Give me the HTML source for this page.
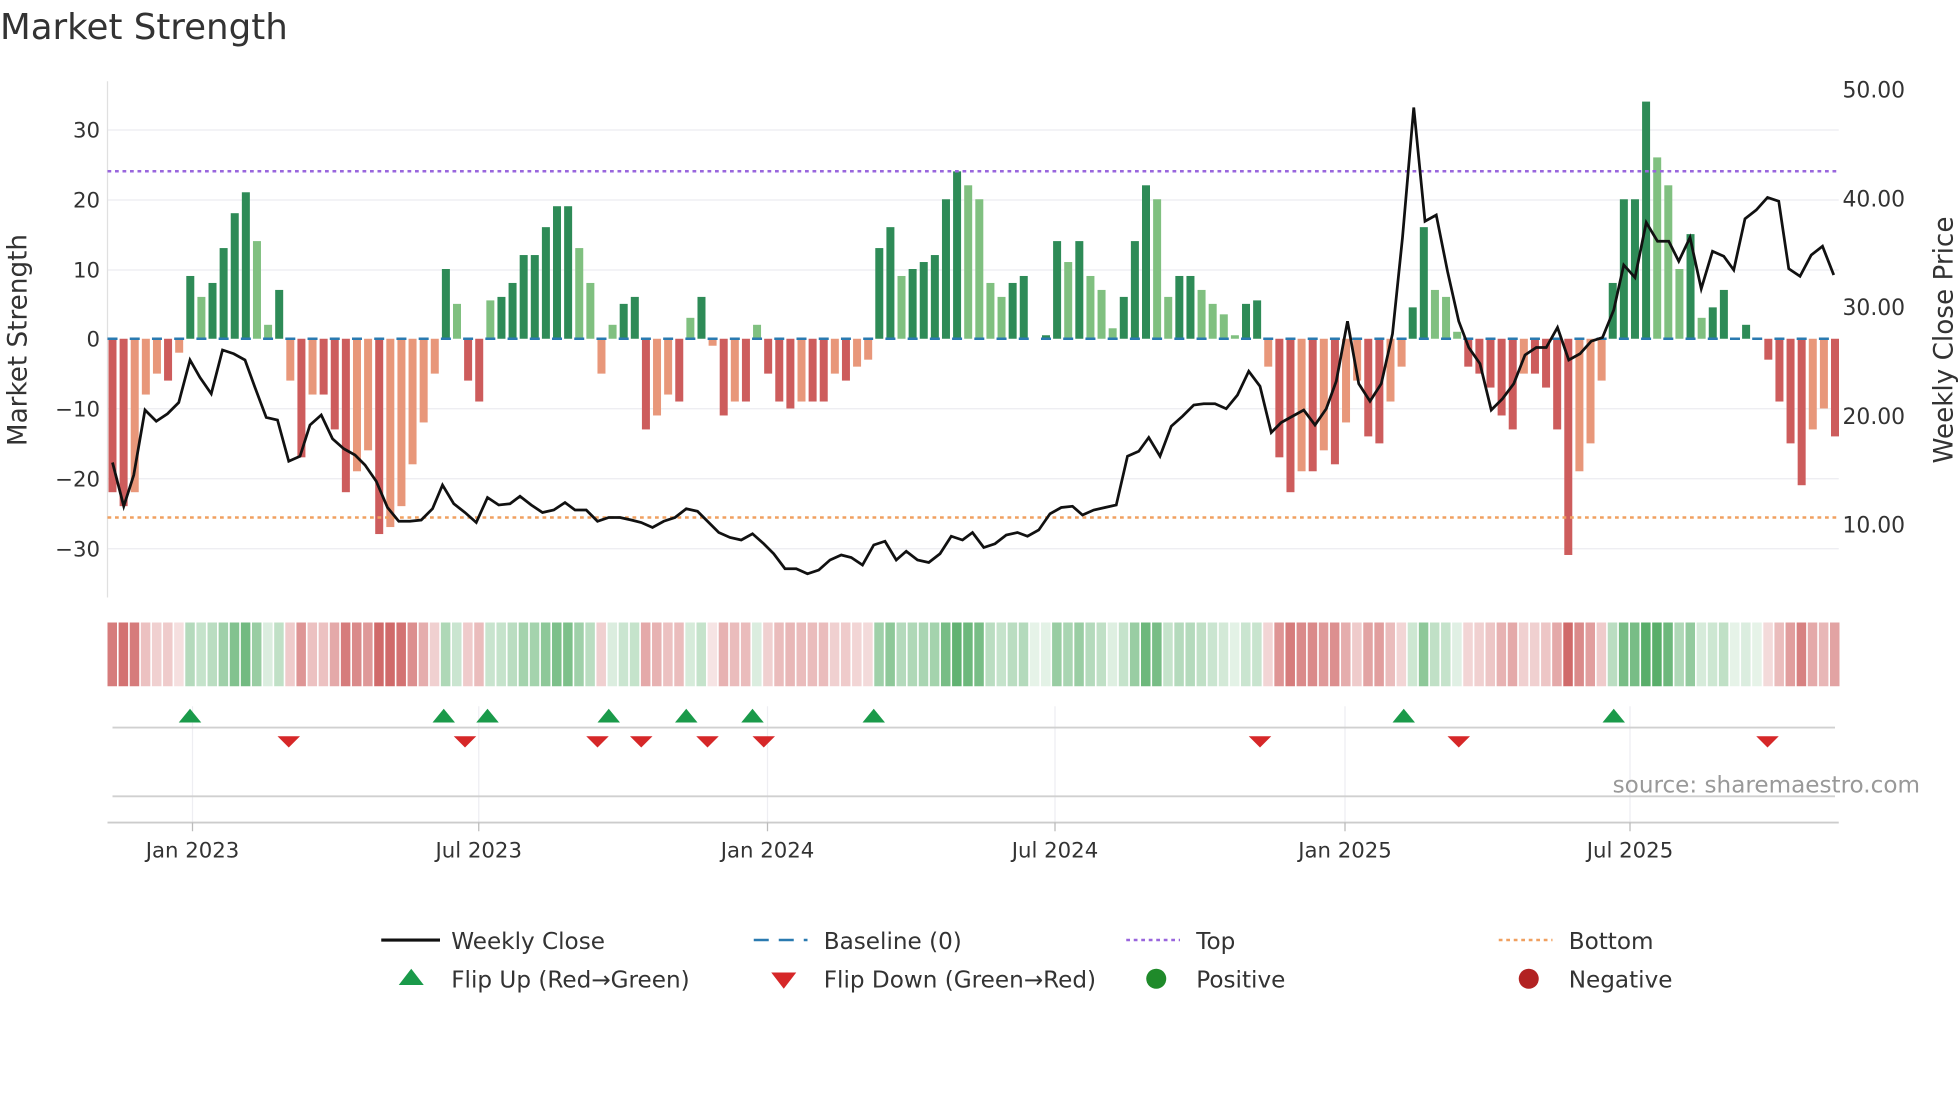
<!DOCTYPE html>
<html><head><meta charset="utf-8"><style>
html,body{margin:0;padding:0;background:#fff;width:1960px;height:1102px;overflow:hidden}
svg{display:block;font-family:"DejaVu Sans","Liberation Sans",sans-serif}
</style></head><body>
<svg id="s" width="1960" height="1102" viewBox="0 0 1568 881.6" xmlns="http://www.w3.org/2000/svg">
<rect width="1568" height="881.6" fill="#fff"/>
<text x="0" y="31" font-size="28.5" fill="#333">Market Strength</text>
<g stroke="#ececf0" stroke-width="1">
<line x1="86" x2="1471" y1="104" y2="104"/><line x1="86" x2="1471" y1="160" y2="160"/><line x1="86" x2="1471" y1="216" y2="216"/><line x1="86" x2="1471" y1="327" y2="327"/><line x1="86" x2="1471" y1="383" y2="383"/><line x1="86" x2="1471" y1="439" y2="439"/>
</g>
<line x1="86" x2="86" y1="65" y2="478" stroke="#e0e0e0"/>
<g font-size="17" fill="#333" text-anchor="end">
<text x="80" y="110">30</text><text x="80" y="166">20</text><text x="80" y="222">10</text><text x="80" y="277">0</text><text x="80" y="333">−10</text><text x="80" y="389">−20</text><text x="80" y="445">−30</text>
</g>
<g font-size="17.5" fill="#333">
<text x="1474" y="78">50.00</text><text x="1474" y="165">40.00</text><text x="1474" y="252">30.00</text><text x="1474" y="339">20.00</text><text x="1474" y="426">10.00</text>
</g>
<text transform="translate(21,272) rotate(-90)" font-size="21" fill="#333" text-anchor="middle">Market Strength</text>
<text transform="translate(1562,272) rotate(-90)" font-size="21" fill="#333" text-anchor="middle">Weekly Close Price</text>
<g id="bars"></g>
<line x1="86" x2="1471" y1="137" y2="137" stroke="#9966dd" stroke-width="2" stroke-dasharray="3,3"/>
<line x1="86" x2="1471" y1="414" y2="414" stroke="#f0a060" stroke-width="2" stroke-dasharray="3,3"/>
<polyline id="price" fill="none" stroke="#111" stroke-width="2.2"/>
<g id="strip"></g>
<g stroke="#eeeef2"><line x1="154" x2="154" y1="565" y2="660"/><line x1="383" x2="383" y1="565" y2="660"/><line x1="614" x2="614" y1="565" y2="660"/><line x1="844" x2="844" y1="565" y2="660"/><line x1="1076" x2="1076" y1="565" y2="660"/><line x1="1304" x2="1304" y1="565" y2="660"/></g>
<line x1="90" x2="1468" y1="582" y2="582" stroke="#d0d0d0" stroke-width="1.5"/>
<line x1="90" x2="1468" y1="637" y2="637" stroke="#d0d0d0" stroke-width="1.5"/>
<line x1="86" x2="1471" y1="658" y2="658" stroke="#ccc" stroke-width="1.5"/>
<g id="flips"></g>
<text x="1536" y="634" font-size="18.5" fill="#999" text-anchor="end">source: sharemaestro.com</text>
<g stroke="#bbb"><line x1="154" x2="154" y1="658" y2="665"/><line x1="383" x2="383" y1="658" y2="665"/><line x1="614" x2="614" y1="658" y2="665"/><line x1="844" x2="844" y1="658" y2="665"/><line x1="1076" x2="1076" y1="658" y2="665"/><line x1="1304" x2="1304" y1="658" y2="665"/></g>
<g font-size="17" fill="#333" text-anchor="middle">
<text x="154" y="686">Jan 2023</text><text x="383" y="686">Jul 2023</text><text x="614" y="686">Jan 2024</text><text x="844" y="686">Jul 2024</text><text x="1076" y="686">Jan 2025</text><text x="1304" y="686">Jul 2025</text>
</g>
<g font-size="18.5" fill="#333">
<line x1="305" x2="352" y1="752" y2="752" stroke="#111" stroke-width="2.5"/><text x="361" y="759">Weekly Close</text>
<line x1="603" x2="646" y1="752" y2="752" stroke="#2a7ab0" stroke-width="2" stroke-dasharray="12,8"/><text x="659" y="759">Baseline (0)</text>
<line x1="901" x2="944" y1="752" y2="752" stroke="#9966dd" stroke-width="2" stroke-dasharray="3,3"/><text x="957" y="759">Top</text>
<line x1="1199" x2="1242" y1="752" y2="752" stroke="#f0a060" stroke-width="2" stroke-dasharray="3,3"/><text x="1255" y="759">Bottom</text>
<polygon points="319,788 329,775 339,788" fill="#1a9a4a"/><text x="361" y="790">Flip Up (Red→Green)</text>
<polygon points="617,778 637,778 627,791" fill="#d62728"/><text x="659" y="790">Flip Down (Green→Red)</text>
<circle cx="925" cy="783" r="8" fill="#1f8a2a"/><text x="957" y="790">Positive</text>
<circle cx="1223" cy="783" r="8" fill="#b22222"/><text x="1255" y="790">Negative</text>
</g>
</svg>
<script>
var v=[-22,-24,-22,-8,-5,-6,-2,9,6,8,13,18,21,14,2,7,-6,-17,-8,-8,-13,-22,-19,-16,-28,-27,-24,-18,-12,-5,10,5,-6,-9,5.5,6,8,12,12,16,19,19,13,8,-5,2,5,6,-13,-11,-8,-9,3,6,-1,-11,-9,-9,2,-5,-9,-10,-9,-9,-9,-5,-6,-4,-3,13,16,9,10,11,12,20,24,22,20,8,6,8,9,0,0.5,14,11,14,9,7,1.5,6,14,22,20,6,9,9,7,5,3.5,0.5,5,5.5,-4,-17,-22,-19,-19,-16,-18,-12,-6,-14,-15,-9,-4,4.5,16,7,6,1,-4,-5,-7,-11,-13,-5,-5,-7,-13,-31,-19,-15,-6,8,20,20,34,26,22,10,15,3,4.5,7,0,2,0,-3,-9,-15,-21,-13,-10,-14];
var n=v.length,dx=(1468-90)/(n-1),y0=271,k=5.58,ns="http://www.w3.org/2000/svg";
function el(t,a,p){var e=document.createElementNS(ns,t);for(var q in a)e.setAttribute(q,a[q]);p.appendChild(e);return e;}
var B=document.getElementById('bars'),S=document.getElementById('strip');
for(var i=0;i<n;i++){var x=90+dx*i,val=v[i],h=Math.abs(val)*k,prev=i?Math.abs(v[i-1]):0;
var strong=Math.abs(val)>=prev;var c;
if(val>0)c=strong?'#2e8b57':'#80c080';else c=strong?'#cd5c5c':'#e8977a';
if(val!=0)el('rect',{x:x-3.2,y:val>0?y0-h:y0,width:6.4,height:Math.max(h,1),fill:c},B);
var a=Math.min(1,0.15+Math.abs(val)/30);
var sc=val>=0?'rgba(60,160,80,'+(a*0.85)+')':'rgba(200,80,80,'+(a*0.85)+')';
el('rect',{x:x-4,y:498,width:7.6,height:51,fill:sc},S);
if(i%2==0)el('line',{x1:x-4,x2:x+4,y1:y0,y2:y0,stroke:'#2a7ab0','stroke-width':2},B);}
var P=[[90,370],[99,405],[107,380],[116,328],[125,337],[134,331],[143,322],[152,288],[160,302],[169,315],[178,280],[187,283],[196,288],[204,310],[213,334],[222,336],[231,369],[240,365],[248,340],[257,332],[266,351],[275,359],[284,364],[292,372],[301,385],[310,406],[319,417],[328,417],[337,416],[346,407],[354,388],[363,403],[372,410],[381,418],[390,398],[399,404],[408,403],[416,397],[425,404],[434,410],[443,408],[452,402],[460,408],[469,408],[478,417],[487,414],[496,414],[505,416],[513,418],[522,422],[531,417],[540,414],[549,407],[558,409],[566,417],[575,426],[584,430],[593,432],[602,427],[611,435],[619,443],[628,455],[637,455],[646,459],[655,456],[664,448],[673,444],[681,446],[690,452],[699,436],[708,433],[717,448],[725,441],[734,448],[743,450],[752,443],[761,429],[770,432],[778,426],[787,438],[796,435],[805,428],[814,426],[822,429],[831,424],[840,411],[849,406],[858,405],[866,412],[875,408],[884,406],[893,404],[902,365],[911,361],[919,350],[928,365],[937,341],[946,333],[955,324],[963,323],[972,323],[981,327],[990,316],[999,297],[1008,309],[1017,346],[1025,338],[1034,333],[1043,328],[1052,340],[1061,327],[1069,305],[1078,257],[1087,307],[1096,321],[1105,307],[1114,267],[1122,190],[1131,86],[1140,177],[1149,172],[1158,217],[1167,257],[1175,278],[1184,291],[1193,328],[1202,319],[1211,307],[1220,284],[1229,278],[1237,278],[1246,262],[1255,288],[1264,283],[1273,273],[1282,270],[1291,248],[1299,212],[1308,222],[1317,178],[1326,193],[1335,193],[1343,209],[1352,190],[1361,231],[1370,201],[1379,205],[1387,216],[1396,175],[1405,168],[1414,158],[1423,161],[1431,215],[1440,221],[1449,204],[1458,197],[1467,220]];
document.getElementById('price').setAttribute('points',P.map(function(p){return p.join(',')}).join(' '));
var F=document.getElementById('flips');
[152,355,390,487,549,602,699,1123,1291].forEach(function(x){el('polygon',{points:(x-9)+',578 '+x+',567 '+(x+9)+',578',fill:'#1a9a4a'},F)});
[231,372,478,513,566,611,1008,1167,1414].forEach(function(x){el('polygon',{points:(x-9)+',589 '+(x+9)+',589 '+x+',598',fill:'#d62728'},F)});
</script>
</body></html>
